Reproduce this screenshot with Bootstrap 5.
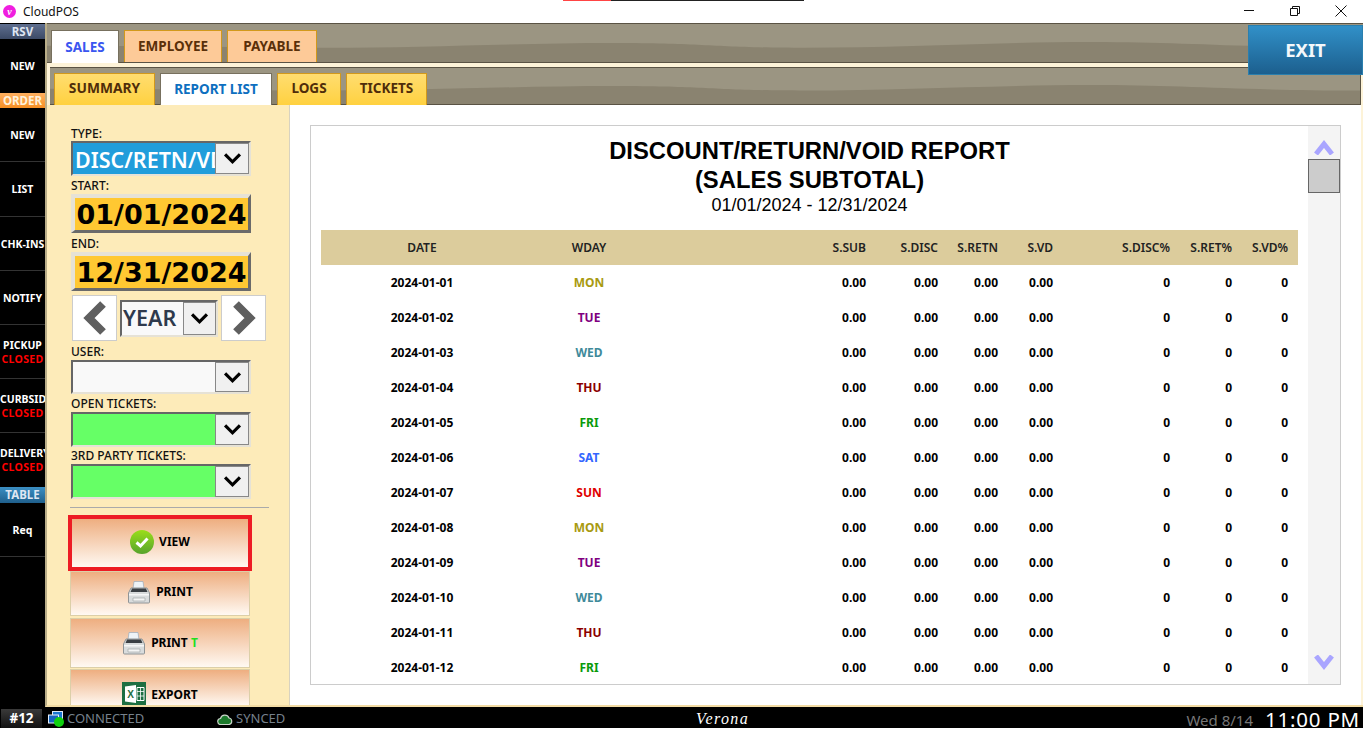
<!DOCTYPE html>
<html lang="en">
<head>
  <meta charset="UTF-8">
  <title>CloudPOS</title>
  <link href="https://cdn.jsdelivr.net/npm/bootstrap@5.3.0/dist/css/bootstrap.min.css" rel="stylesheet">
  <style>
    html, body { width: 1370px; height: 733px; overflow: hidden; }
    body { background: #fff; font-family: "Noto Sans", sans-serif; font-size: 12px; color: #000; position: relative; }

    .title-bar { height: 23px; padding-left: 3px; }
    .app-logo { width: 13px; height: 13px; border-radius: 50%; background: #f01ee0; color: #fff; font: italic bold 10px/13px "Liberation Serif", serif; text-align: center; margin-right: 7px; }
    .app-name { font-size: 12px; color: #111; }
    .load-line { position: absolute; left: 563px; top: 0; width: 241px; height: 1px; background: linear-gradient(90deg, #f44 0 48px, #222 48px); }
    .win-btns { position: absolute; right: 6px; top: 0; height: 21px; }
    .win-btn { width: 46px; height: 21px; }

    .app-wrap { width: 1363px; height: 684px; }
    .side-bar { width: 45px; background: #000; padding-top: 1px; }
    .side-head { height: 15px; font-size: 11.5px; font-weight: 700; line-height: 15px; text-align: center; color: #dfe6f2; }
    .head-rsv { background: linear-gradient(#5f6f8f, #3c4a66); }
    .head-order { background: linear-gradient(#ffb060, #f58f25); color: #fff2dc; }
    .head-table { background: linear-gradient(#3b8fc4, #1f5f8c); height: 16px; }
    .side-item { height: 54px; border-bottom: 1px solid #333; color: #fff; font-size: 10.5px; font-weight: 700; line-height: 14px; text-align: center; white-space: nowrap; overflow: hidden; }
    .side-item.last-nb { border-bottom: 0; }
    .side-item.tall-item { height: 55px; }
    .side-closed { color: #f00; letter-spacing: .3px; }

    .main-area { width: 1318px; height: 684px; border-left: 2px solid #b9ad88; border-bottom: 2px solid #f3dca4; background: #fdf3d8; position: relative; }
    .wave-one, .wave-two {
      background-color: #9b9582;
      background-size: 100% 100%;
      background-image: url("data:image/svg+xml,%3Csvg xmlns='http://www.w3.org/2000/svg' viewBox='0 0 1320 40' preserveAspectRatio='none'%3E%3Cpath fill='%238a8370' d='M0 23C100 23 190 25 281 25C380 25 470 20 570 20C665 20 665 25 761 25C860 25 950 19 1049 19C1140 19 1200 25 1320 25V40H0Z'/%3E%3C/svg%3E");
    }
    .wave-one { height: 40px; border-top: 1px solid #5a5344; border-bottom: 1px solid #5a5344; padding: 6px 0 0 4px; gap: 5px; }
    .wave-two { height: 38px; margin: 4px 0 0 3px; width: 1311px; border-top: 1px solid #5a5344; border-bottom: 1px solid #5a5344; border-right: 1px solid #5a5344; padding: 5px 0 0 4px; gap: 5px; }
    .tab-item { display: flex; align-items: center; justify-content: center; font-size: 13.5px; font-weight: 700; height: 32px; border: 1px solid #d2991b; border-bottom: 0; }
    .wave-two .tab-item { padding-bottom: 2px; }
    .tab-peach { background: #fdca98; color: #5a300a; }
    .tab-yellow { background: linear-gradient(#ffdd70, #ffd140); color: #4f2d0a; }
    .tab-on { background: #fff; border-color: #77705e; height: 33px; }
    .tab-sales { color: #3a56f0; width: 68px; }
    .tab-rep { color: #0d6fc0; width: 112px; }
    .w-employee { width: 98px; }
    .w-payable { width: 90px; }
    .w-summary { width: 101px; font-size: 13.8px; }
    .w-logs { width: 64px; }
    .w-tickets { width: 81px; }

    .panel-row { height: 600px; }
    .left-panel { width: 243px; background: #fdebb9; border-right: 1px solid #d8d2c0; padding: 21px 0 0 24px; overflow: hidden; }
    .fld-label { font-size: 12px; line-height: 16px; height: 16px; font-weight: 500; color: #111; white-space: nowrap; }
    .lab-15 { height: 15px; }
    .lab-18 { height: 18px; padding-top: 2px; }
    .lab-19 { height: 19px; padding-top: 3px; }
    .lab-17 { height: 17px; padding-top: 1px; }
    .combo { width: 180px; border-style: solid; border-color: #666 #e6e2d6 #e6e2d6 #666; border-width: 2px; background: #f9f9f9; }
    .combo-h35 { height: 35px; }
    .combo-h34 { height: 34px; }
    .combo-text { width: 142px; overflow: hidden; white-space: nowrap; font-size: 21.5px; font-weight: 600; line-height: 33px; padding-left: 2px; }
    .combo-type { background: #219ddb; color: #fff; }
    .combo-green { background: #66ff66; }
    .combo-drop { width: 34px; background: #f0f0f0; border: 1px solid #888; margin-left: auto; }
    .drop-year { width: 33px; }
    .date-box { width: 180px; height: 39px; border-style: solid; border-width: 4px 3px 3px 4px; border-color: #e6e2d6 #6a6a6a #6a6a6a #e6e2d6; background: #ffc832; font: 700 27px/33px "DejaVu Sans", sans-serif; text-align: center; white-space: nowrap; overflow: hidden; }
    .step-row { margin: 4px 0 0 1px; }
    .step-btn { width: 45px; height: 46px; background: #fff; border: 1px solid #ccc; }
    .combo-year { width: 98px; height: 37px; margin: 0 3px; }
    .year-text { font-size: 21.5px; font-weight: 600; color: #2f3a4c; width: 62px; line-height: 32px; padding-left: 1px; }
    .panel-rule { width: 199px; margin: 8px 0 7px -1px; height: 1px; background: #aaa; }
    .act-btn { width: 180px; border: 1px solid #dccfa8; border-radius: 0; background: linear-gradient(#eeae80, #fff9f2); font-size: 12px; font-weight: 700; color: #000; padding: 0; gap: 5px; margin-left: -1px; }
    .act-view { width: 184px; height: 56px; border: 4px solid #ed1c24; margin-left: -3px; padding-bottom: 3px; background: linear-gradient(#eeae80, #fff9f2); }
    .h-print { height: 45px; margin-bottom: 2px; padding-bottom: 3px; }
    .h-printt { height: 50px; margin-bottom: 1px; }
    .h-export { height: 37px; align-items: flex-start; padding-top: 12px; border-bottom: 0; }
    .green-t { color: #1fe01f; }

    .report-pane { width: 1071px; background: #fff; padding: 20px 0 0 20px; }
    .report-box { width: 1031px; height: 560px; border: 1px solid #ccc; overflow: hidden; }
    .report-body { width: 997px; padding: 0 10px; }
    .rep-title { font: 700 23.8px/29px "Liberation Sans", sans-serif; text-align: center; margin: 10px 0 0; }
    .rep-range { font: 400 18px/20px "Liberation Sans", sans-serif; text-align: center; padding-top: 1px; margin-bottom: 15px; }
    .rep-table { width: 977px; table-layout: fixed; border-collapse: collapse; font-size: 12px; font-weight: 700; }
    .rep-table th, .rep-table td { height: 35px; padding: 0 10px 0 0; text-align: right; white-space: nowrap; }
    .rep-table th { background: #dccc9c; font-weight: 600; color: #222; }
    .rep-table th.cen, .rep-table td.cen { text-align: center; padding: 0; }
    .c-date { width: 202px; }
    .c-wday { width: 132px; }
    .c-sub { width: 221px; }
    .c-disc { width: 72px; }
    .c-retn { width: 60px; }
    .c-vd { width: 55px; }
    .c-pdisc { width: 117px; }
    .c-pret { width: 62px; }
    .c-pvd { width: 56px; }
    .scroll-col { width: 32px; background: #f4f4f4; padding-top: 14px; }
    .scroll-thumb { height: 34px; background: #ccc; border: 1px solid #666; margin-top: 4px; }
    .scroll-down { margin-top: auto; margin-bottom: 14px; }

    .exit-btn { position: absolute; top: 2px; right: 0; width: 115px; height: 50px; background: linear-gradient(#3190c8, #1c5f8e); border: 1px solid #2a7fae; border-radius: 0; color: #f4f8fb; font-size: 18.5px; font-weight: 700; }

    .status-bar { width: 1363px; height: 21px; padding-top: 3px; background: #000; position: relative; color: #76818c; font-size: 13px; }
    .tick-no { width: 41px; height: 19px; margin: -2px 0 0 1px; background: linear-gradient(#3a3a3a, #111); color: #fff; font-size: 13.5px; font-weight: 700; text-align: center; line-height: 19px; }
    .st-conn { width: 169px; margin-left: 6px; gap: 3px; }
    .st-sync { gap: 3px; width: 300px; }
    .st-place { position: absolute; left: 696px; top: 1px; color: #fff; font: italic 400 16px/21px "Liberation Serif", serif; letter-spacing: 1.4px; }
    .st-date { margin-left: auto; color: #777; font-size: 15px; line-height: 18px; padding-top: 1px; }
    .st-time { width: 110px; text-align: right; padding-right: 3px; color: #fff; font-size: 20.5px; line-height: 18px; letter-spacing: .8px; white-space: nowrap; }
  </style>
</head>
<body>
  <svg width="0" height="0" class="d-block">
    <defs>
      <symbol id="ico-down" viewBox="0 0 20 14"><path d="M2 2.500 10 10.500 18 2.500" fill="none" stroke="#000" stroke-width="3.400"/></symbol>
      <linearGradient id="grad-check" x1="0" y1="0" x2="0" y2="1"><stop offset="0" stop-color="#9ade1a"/><stop offset="1" stop-color="#57a32c"/></linearGradient>
      <symbol id="ico-printer" viewBox="0 0 24 24">
        <path d="M7 1.500h9l1 7H6z" fill="#eef3f7" stroke="#9ab" stroke-width=".7"/>
        <path d="M4 8h16l2.500 5v9a1 1 0 0 1-1 1h-19a1 1 0 0 1-1-1v-9z" fill="#d9dcdd" stroke="#8f9496"/>
        <path d="M5 8.500h14l1.500 3.500h-17z" fill="#3a3f44"/>
        <path d="M2 14h20v1.500H2z" fill="#f6f7f7"/>
        <path d="M6 18h12v3H6z" fill="#f4f5f5" stroke="#a5a9ab" stroke-width=".7"/>
      </symbol>
    </defs>
  </svg>

  <div class="title-bar d-flex align-items-center">
    <div class="app-logo">v</div>
    <div class="app-name">CloudPOS</div>
  </div>
  <div class="load-line"></div>
  <div class="win-btns d-flex">
    <div class="win-btn d-flex align-items-center justify-content-center">
      <svg width="10" height="1"><rect width="10" height="1" fill="#111"/></svg>
    </div>
    <div class="win-btn d-flex align-items-center justify-content-center">
      <svg width="10" height="10" viewBox="0 0 10 10"><path d="M.5 2.500h7v7h-7zM2.500 2.500v-2h7v7h-2" fill="none" stroke="#111"/></svg>
    </div>
    <div class="win-btn d-flex align-items-center justify-content-center">
      <svg width="12" height="12" viewBox="0 0 12 12"><path d="M.5.5l11 11M11.500.5l-11 11" fill="none" stroke="#111"/></svg>
    </div>
  </div>

  <div class="app-wrap d-flex">
    <div class="side-bar flex-shrink-0">
      <div class="side-head head-rsv">RSV</div>
      <div class="side-item d-flex flex-column justify-content-center last-nb">NEW</div>
      <div class="side-head head-order">ORDER</div>
      <div class="side-item d-flex flex-column justify-content-center">NEW</div>
      <div class="side-item tall-item d-flex flex-column justify-content-center">LIST</div>
      <div class="side-item d-flex flex-column justify-content-center">CHK-INS</div>
      <div class="side-item d-flex flex-column justify-content-center">NOTIFY</div>
      <div class="side-item d-flex flex-column justify-content-center"><div>PICKUP</div><div class="side-closed">CLOSED</div></div>
      <div class="side-item d-flex flex-column justify-content-center"><div>CURBSIDE</div><div class="side-closed">CLOSED</div></div>
      <div class="side-item d-flex flex-column justify-content-center last-nb"><div>DELIVERY</div><div class="side-closed">CLOSED</div></div>
      <div class="side-head head-table">TABLE</div>
      <div class="side-item d-flex flex-column justify-content-center">Req</div>
    </div>

    <div class="main-area flex-shrink-0">
      <div class="wave-one d-flex">
        <div class="tab-item tab-on tab-sales">SALES</div>
        <div class="tab-item tab-peach w-employee">EMPLOYEE</div>
        <div class="tab-item tab-peach w-payable">PAYABLE</div>
      </div>
      <div class="wave-two d-flex">
        <div class="tab-item tab-yellow w-summary">SUMMARY</div>
        <div class="tab-item tab-on tab-rep">REPORT LIST</div>
        <div class="tab-item tab-yellow w-logs">LOGS</div>
        <div class="tab-item tab-yellow w-tickets">TICKETS</div>
      </div>

      <div class="panel-row d-flex">
        <div class="left-panel flex-shrink-0">
          <div class="fld-label lab-15">TYPE:</div>
          <div class="combo combo-h35 d-flex">
            <div class="combo-text combo-type">DISC/RETN/VD</div>
            <div class="combo-drop d-flex align-items-center justify-content-center"><svg width="19" height="13"><use href="#ico-down"/></svg></div>
          </div>
          <div class="fld-label lab-18">START:</div>
          <div class="date-box">01/01/2024</div>
          <div class="fld-label lab-19">END:</div>
          <div class="date-box">12/31/2024</div>
          <div class="step-row d-flex align-items-center">
            <div class="step-btn d-flex align-items-center justify-content-center">
              <svg width="24" height="34" viewBox="0 0 24 34"><path d="M20 3 6 17 20 31" fill="none" stroke="#5f5f5f" stroke-width="8"/></svg>
            </div>
            <div class="combo combo-year d-flex">
              <div class="year-text">YEAR</div>
              <div class="combo-drop drop-year d-flex align-items-center justify-content-center"><svg width="19" height="13"><use href="#ico-down"/></svg></div>
            </div>
            <div class="step-btn d-flex align-items-center justify-content-center">
              <svg width="24" height="34" viewBox="0 0 24 34"><path d="M4 3 18 17 4 31" fill="none" stroke="#5f5f5f" stroke-width="8"/></svg>
            </div>
          </div>
          <div class="fld-label lab-19">USER:</div>
          <div class="combo combo-h34 d-flex">
            <div class="combo-text"></div>
            <div class="combo-drop d-flex align-items-center justify-content-center"><svg width="19" height="13"><use href="#ico-down"/></svg></div>
          </div>
          <div class="fld-label lab-18">OPEN TICKETS:</div>
          <div class="combo combo-h35 d-flex">
            <div class="combo-text combo-green"></div>
            <div class="combo-drop d-flex align-items-center justify-content-center"><svg width="19" height="13"><use href="#ico-down"/></svg></div>
          </div>
          <div class="fld-label lab-17">3RD PARTY TICKETS:</div>
          <div class="combo combo-h35 d-flex">
            <div class="combo-text combo-green"></div>
            <div class="combo-drop d-flex align-items-center justify-content-center"><svg width="19" height="13"><use href="#ico-down"/></svg></div>
          </div>
          <div class="panel-rule"></div>

          <button class="btn act-btn act-view d-flex align-items-center justify-content-center">
            <svg width="24" height="24" viewBox="0 0 24 24"><circle cx="12" cy="12" r="12" fill="url(#grad-check)"/><path d="M6.500 12.500 10.500 16 17.500 8.500" fill="none" stroke="#fff" stroke-width="3"/></svg>
            VIEW
          </button>
          <button class="btn act-btn h-print d-flex align-items-center justify-content-center">
            <svg width="24" height="24"><use href="#ico-printer"/></svg>
            PRINT
          </button>
          <button class="btn act-btn h-printt d-flex align-items-center justify-content-center">
            <svg width="24" height="24"><use href="#ico-printer"/></svg>
            <span>PRINT <span class="green-t">T</span></span>
          </button>
          <button class="btn act-btn h-export d-flex justify-content-center">
            <svg width="24" height="24" viewBox="0 0 24 24">
              <rect width="24" height="24" fill="#1d6f42"/>
              <path d="M3 4.500 14 3v18L3 19.500z" fill="#fff"/>
              <path d="M15 5.500h7v13h-7z" fill="none" stroke="#fff"/>
              <path d="M15 9.500h7M15 14h7M18.500 5.500v13" stroke="#fff" stroke-width=".8"/>
              <text x="8.500" y="15.500" text-anchor="middle" font-family="Liberation Sans" font-weight="700" font-size="10" fill="#1d6f42">X</text>
            </svg>
            <span class="mt-1">EXPORT</span>
          </button>
        </div>

        <div class="report-pane flex-shrink-0">
          <div class="report-box d-flex">
            <div class="report-body flex-shrink-0">
              <div class="rep-title">DISCOUNT/RETURN/VOID REPORT<br>(SALES SUBTOTAL)</div>
              <div class="rep-range">01/01/2024 - 12/31/2024</div>
              <table class="rep-table">
                <colgroup>
                  <col class="c-date"><col class="c-wday"><col class="c-sub"><col class="c-disc"><col class="c-retn"><col class="c-vd"><col class="c-pdisc"><col class="c-pret"><col class="c-pvd">
                </colgroup>
                <thead>
                  <tr>
                    <th class="cen">DATE</th><th class="cen">WDAY</th><th>S.SUB</th><th>S.DISC</th><th>S.RETN</th><th>S.VD</th><th>S.DISC%</th><th>S.RET%</th><th>S.VD%</th>
                  </tr>
                </thead>
                <tbody id="repRows"></tbody>
              </table>
            </div>
            <div class="scroll-col flex-shrink-0 d-flex flex-column">
              <svg class="d-block mx-auto" width="20" height="15" viewBox="0 0 20 15"><path d="M2 14 10 4 18 14" fill="none" stroke="#a9a5ff" stroke-width="5"/></svg>
              <div class="scroll-thumb"></div>
              <svg class="d-block mx-auto scroll-down" width="20" height="15" viewBox="0 0 20 15"><path d="M2 1 10 11 18 1" fill="none" stroke="#a9a5ff" stroke-width="5"/></svg>
            </div>
          </div>
        </div>
      </div>

      <button class="btn exit-btn">EXIT</button>
    </div>
  </div>

  <div class="status-bar d-flex align-items-center">
    <div class="tick-no flex-shrink-0">#12</div>
    <div class="st-conn d-flex align-items-center flex-shrink-0">
      <svg width="16" height="16" viewBox="0 0 16 16">
        <rect x="4.500" y=".5" width="10" height="8" fill="#1976d2" stroke="#dfe9f5"/>
        <rect x=".5" y="4" width="10" height="8" fill="#1565c0" stroke="#e8f0fa"/>
        <circle cx="11" cy="11" r="5" fill="#0fd10f"/>
      </svg>
      <span>CONNECTED</span>
    </div>
    <div class="st-sync d-flex align-items-center flex-shrink-0">
      <svg width="16" height="11" viewBox="0 0 16 11"><path d="M4 10.500a3 3 0 0 1-.5-6 4.500 4.500 0 0 1 8.500-.5 3.300 3.300 0 0 1 0 6.500z" fill="#1c7a2c" stroke="#c9d4c9" stroke-width="1.200"/></svg>
      <span>SYNCED</span>
    </div>
    <div class="st-place">Verona</div>
    <div class="st-date">Wed 8/14</div>
    <div class="st-time flex-shrink-0">11:00 PM</div>
  </div>

  <script>
    const dias = [
      ['MON', '#a89a10'], ['TUE', '#800080'], ['WED', '#408a9a'], ['THU', '#8b0000'],
      ['FRI', '#0a9a0a'], ['SAT', '#3366ff'], ['SUN', '#e00000']
    ];
    const cuerpo = document.getElementById('repRows');
    for (let i = 0; i < 12; i++) {
      const d = dias[i % 7];
      const row = cuerpo.insertRow();
      row.innerHTML = `
        <td class="cen">2024-01-${String(i + 1).padStart(2, '0')}</td>
        <td class="cen" style="color:${d[1]}">${d[0]}</td>
        <td>0.00</td><td>0.00</td><td>0.00</td><td>0.00</td>
        <td>0</td><td>0</td><td>0</td>
      `;
    }
  </script>
  <script src="https://cdn.jsdelivr.net/npm/bootstrap@5.3.0/dist/js/bootstrap.bundle.min.js"></script>
</body>
</html>
